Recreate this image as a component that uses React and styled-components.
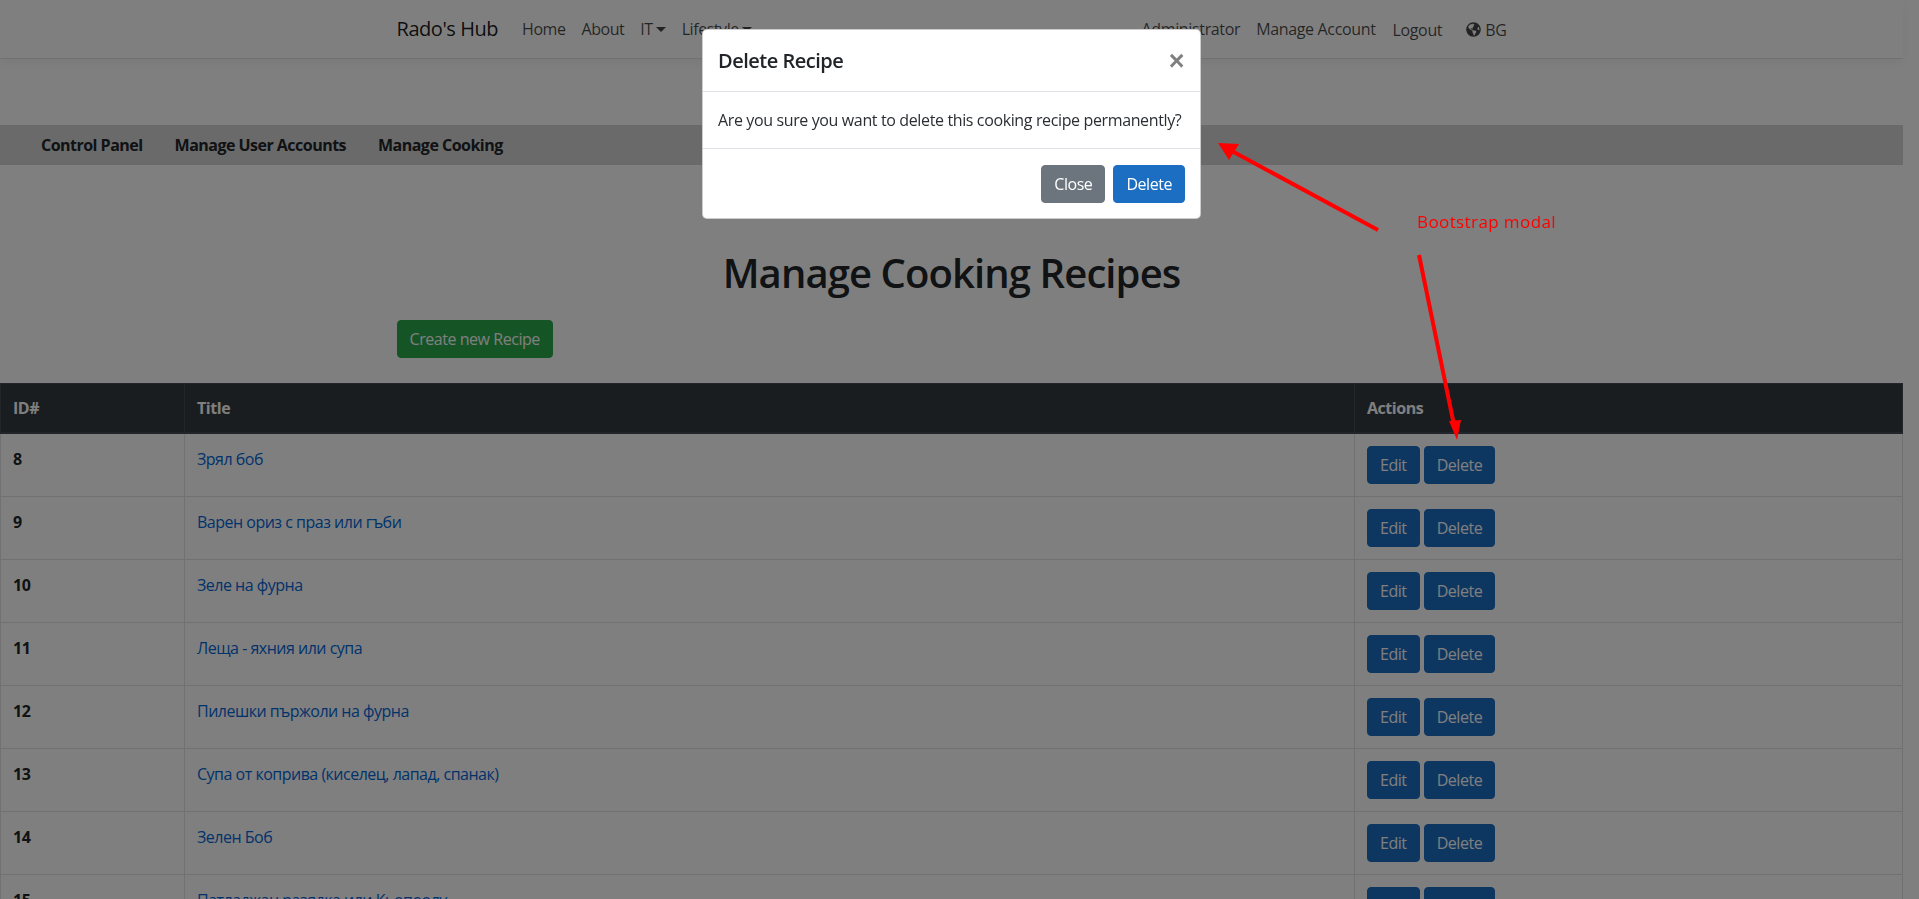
import React from "react";
import styled, { createGlobalStyle } from "styled-components";
import { FaGlobeAmericas } from "react-icons/fa";

const Global = createGlobalStyle`
  * { box-sizing: border-box; }
  html, body { margin: 0; height: 100%; overflow: hidden; background: #fff; }
  body {
    padding-right: 16px;
    font-family: "Open Sans", "Noto Sans", sans-serif;
    font-size: 16px;
    line-height: 24px;
    letter-spacing: -0.45px;
    color: #212529;
  }
`;

const Navbar = styled.header`
  height: 59px;
  background: #fff;
  border-bottom: 1px solid #dee2e6;
  box-shadow: 0 4px 12px rgba(0, 0, 0, 0.05);
`;
const Container = styled.div`
  width: 1140px;
  margin: 0 auto;
  padding: 0 15px;
`;
const NavInner = styled(Container)`
  height: 58px;
  display: flex;
  align-items: center;
  justify-content: space-between;
`;
const NavGroup = styled.nav`
  display: flex;
  align-items: center;
  letter-spacing: ${(p) => p.$spacing ?? "inherit"};
`;
const Brand = styled.a`
  font-size: 20px;
  color: rgba(0, 0, 0, 0.9);
  margin-right: 24px;
`;
const NavLink = styled.a`
  display: inline-flex;
  align-items: center;
  color: rgba(0, 0, 0, 0.72);
  margin-right: ${(p) => p.$gap ?? 16}px;
  margin-top: ${(p) => p.$drop ?? 0}px;
`;
const Caret = styled.span`
  display: inline-block;
  width: 0;
  height: 0;
  margin-left: 3px;
  border-top: 5px solid currentColor;
  border-left: 5px solid transparent;
  border-right: 5px solid transparent;
`;
const Globe = styled(FaGlobeAmericas)`
  width: 15px;
  height: 15px;
  margin-right: 4px;
`;
const SubNav = styled.nav`
  margin-top: 66px;
  height: 40px;
  padding-left: 41px;
  display: flex;
  align-items: center;
  gap: 32px;
  background: #d4d4d4;
`;
const SubLink = styled.a`
  font-weight: 700;
  letter-spacing: -0.52px;
  color: #212529;
`;
const Title = styled.h1`
  margin: 84px 0 23px;
  text-align: center;
  font-size: 40px;
  line-height: 48px;
  font-weight: 600;
  letter-spacing: -0.9px;
`;
const Btn = styled.button`
  height: 38px;
  padding: 0 12px;
  font: inherit;
  letter-spacing: -0.45px;
  color: #fff;
  background: ${(p) => p.$bg};
  border: 1px solid ${(p) => p.$bg};
  border-radius: 4px;
`;
const Table = styled.table`
  margin-top: 25px;
  width: 100%;
  table-layout: fixed;
  border-collapse: collapse;
`;
const Th = styled.th`
  width: ${(p) => p.$w || "auto"};
  height: 49px;
  padding: 12px;
  text-align: left;
  font-weight: 700;
  color: #fff;
  background: #343a40;
  border: 1px solid #454d55;
  border-bottom-width: 2px;
`;
const Td = styled.td`
  height: 63px;
  padding: ${(p) => (p.$actions ? "12px" : "13px 12px 11px")};
  vertical-align: top;
  border: 1px solid #dee2e6;
  font-weight: ${(p) => (p.$bold ? 700 : 400)};
  letter-spacing: -0.5px;
`;
const RecipeLink = styled.a`
  color: #0366d6;
`;
const Actions = styled.div`
  display: flex;
  gap: 4px;
`;
const Backdrop = styled.div`
  position: fixed;
  inset: 0;
  background: rgba(0, 0, 0, 0.5);
`;
const Modal = styled.div`
  position: fixed;
  top: 29px;
  left: 702px;
  width: 499px;
  background: #fff;
  border: 1px solid rgba(0, 0, 0, 0.2);
  border-radius: 5px;
`;
const ModalHeader = styled.div`
  height: 62px;
  padding: 16px 16px 16px 15px;
  display: flex;
  justify-content: space-between;
  border-bottom: 1px solid #dee2e6;
`;
const ModalTitle = styled.h5`
  margin: 0;
  font-size: 20px;
  line-height: 30px;
  font-weight: 600;
  letter-spacing: -0.5px;
`;
const CloseX = styled.span`
  font-family: "Liberation Sans", sans-serif;
  font-size: 27px;
  line-height: 30px;
  font-weight: 700;
  color: rgba(0, 0, 0, 0.5);
`;
const ModalBody = styled.div`
  height: 57px;
  padding: 16px 15px;
  border-bottom: 1px solid #dee2e6;
  letter-spacing: -0.37px;
  color: #2b2f33;
`;
const ModalFooter = styled.div`
  padding: 16px 15px 15px;
  display: flex;
  justify-content: flex-end;
  gap: 8px;
`;
const Arrows = styled.svg`
  position: fixed;
  inset: 0;
  width: 1919px;
  height: 899px;
  pointer-events: none;
`;
const Note = styled.span`
  position: fixed;
  left: 1417px;
  top: 210px;
  color: #ff0000;
  font-size: 17px;
  letter-spacing: 0.4px;
`;

const recipes = [
  [8, "Зрял боб"],
  [9, "Варен ориз с праз или гъби"],
  [10, "Зеле на фурна"],
  [11, "Леща - яхния или супа"],
  [12, "Пилешки пържоли на фурна"],
  [13, "Супа от коприва (киселец, лапад, спанак)"],
  [14, "Зелен Боб"],
  [15, "Патладжан разядка или Кьопоолу"],
];

export default function App() {
  return (
    <>
      <Global />
      <Navbar>
        <NavInner>
          <NavGroup>
            <Brand>Rado's Hub</Brand>
            <NavLink>Home</NavLink>
            <NavLink>About</NavLink>
            <NavLink>IT<Caret /></NavLink>
            <NavLink>Lifestyle<Caret /></NavLink>
          </NavGroup>
          <NavGroup $spacing="-0.35px">
            <NavLink>Administrator</NavLink>
            <NavLink $gap={17}>Manage Account</NavLink>
            <NavLink $gap={24} $drop={2}>Logout</NavLink>
            <NavLink $gap={0} $drop={1}><Globe />BG</NavLink>
          </NavGroup>
        </NavInner>
      </Navbar>
      <SubNav>
        <SubLink>Control Panel</SubLink>
        <SubLink>Manage User Accounts</SubLink>
        <SubLink>Manage Cooking</SubLink>
      </SubNav>
      <Title>Manage Cooking Recipes</Title>
      <Container>
        <Btn $bg="#2aa84a">Create new Recipe</Btn>
      </Container>
      <Table>
        <thead>
          <tr>
            <Th $w="184px">ID#</Th>
            <Th $w="1170px">Title</Th>
            <Th>Actions</Th>
          </tr>
        </thead>
        <tbody>
          {recipes.map(([id, title]) => (
            <tr key={id}>
              <Td $bold>{id}</Td>
              <Td><RecipeLink>{title}</RecipeLink></Td>
              <Td $actions>
                <Actions>
                  <Btn $bg="#1b6ec2">Edit</Btn>
                  <Btn $bg="#1b6ec2">Delete</Btn>
                </Actions>
              </Td>
            </tr>
          ))}
        </tbody>
      </Table>
      <Backdrop />
      <Modal>
        <ModalHeader>
          <ModalTitle>Delete Recipe</ModalTitle>
          <CloseX>×</CloseX>
        </ModalHeader>
        <ModalBody>Are you sure you want to delete this cooking recipe permanently?</ModalBody>
        <ModalFooter>
          <Btn $bg="#6c757d">Close</Btn>
          <Btn $bg="#1b6ec2">Delete</Btn>
        </ModalFooter>
      </Modal>
      <Arrows viewBox="0 0 1919 899">
        <line x1="1378" y1="230" x2="1230" y2="150" stroke="#f00" strokeWidth="4" />
        <polygon points="1218,143 1239,144 1229,160" fill="#f00" />
        <line x1="1419" y1="255" x2="1454" y2="425" stroke="#f00" strokeWidth="4" />
        <polygon points="1457,440 1449,421 1461,420" fill="#f00" />
      </Arrows>
      <Note>Bootstrap modal</Note>
    </>
  );
}
